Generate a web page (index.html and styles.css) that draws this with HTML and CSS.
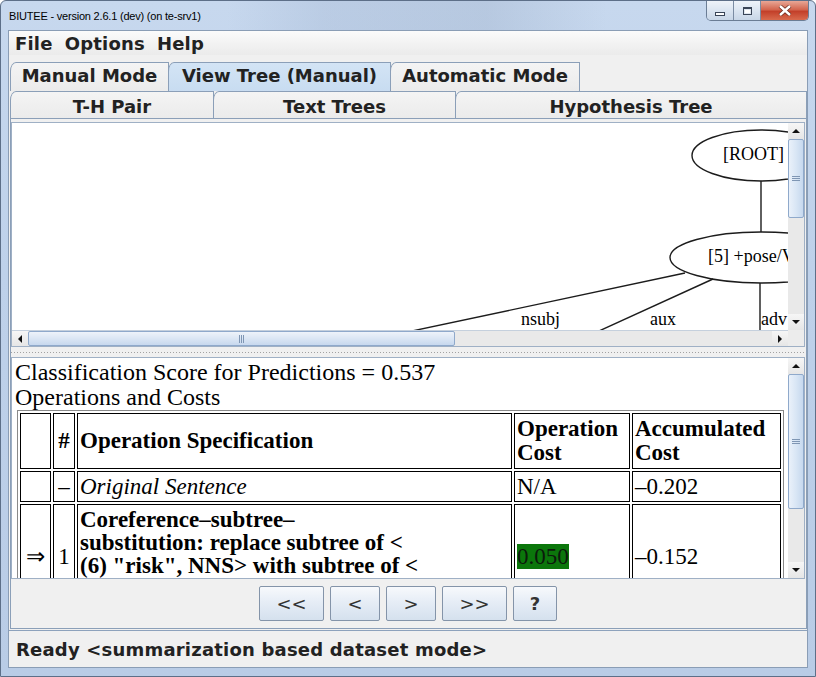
FILE: index.html
```html
<!DOCTYPE html>
<html>
<head>
<meta charset="utf-8">
<title>BIUTEE</title>
<link rel="stylesheet" href="styles.css">
</head>
<body>
<div class="window">
  <div class="titlebar">
    <span class="title">BIUTEE - version 2.6.1 (dev) (on te-srv1)</span>
    <div class="winbtns">
      <div class="wb"><span class="ico-min"></span></div>
      <div class="wb"><span class="ico-max"></span></div>
      <div class="wb close">
        <svg width="14" height="11" viewBox="0 0 14 11"><path class="x-out" d="M2 1 L12 10 M12 1 L2 10"/><path class="x-in" d="M2 1 L12 10 M12 1 L2 10"/></svg>
      </div>
    </div>
  </div>
  <div class="client">
    <div class="menubar"><span>File</span><span>Options</span><span>Help</span></div>
    <div class="tabrow row1">
      <div class="tab t-manual">Manual Mode</div>
      <div class="tab t-view selected">View Tree (Manual)</div>
      <div class="tab t-auto">Automatic Mode</div>
    </div>
    <div class="tabrow row2">
      <div class="tab t-pair">T-H Pair</div>
      <div class="tab t-text">Text Trees</div>
      <div class="tab t-hyp">Hypothesis Tree</div>
    </div>
    <div class="tabpanel">
      <div class="pane tree-pane">
        <div class="viewport">
          <svg class="tree" width="776" height="207" viewBox="0 0 776 207">
            <g class="edges">
              <ellipse cx="749" cy="32.5" rx="69" ry="25.5"/>
              <line x1="749" y1="58" x2="749" y2="109"/>
              <ellipse cx="749" cy="134.5" rx="91" ry="25.5"/>
              <line x1="673" y1="150" x2="400" y2="208"/>
              <line x1="701" y1="156" x2="587" y2="208"/>
              <line x1="748" y1="160" x2="748" y2="208"/>
            </g>
            <g class="labels">
              <text x="711" y="37">[ROOT]</text>
              <text x="696" y="139">[5] +pose/V</text>
              <text x="509" y="202">nsubj</text>
              <text x="638" y="202">aux</text>
              <text x="749" y="202">adv</text>
            </g>
          </svg>
        </div>
        <div class="vscroll">
          <div class="arrow"><span class="tri-up"></span></div>
          <div class="thumb v tree-thumb"><span class="grip-h"></span></div>
          <div class="track"></div>
          <div class="arrow"><span class="tri-down"></span></div>
        </div>
        <div class="hscroll">
          <div class="arrow h"><span class="tri-left"></span></div>
          <div class="thumb h"><span class="grip-v"></span></div>
          <div class="track"></div>
          <div class="arrow h"><span class="tri-right"></span></div>
        </div>
        <div class="corner"></div>
      </div>
      <div class="divider"></div>
      <div class="pane doc-pane">
        <div class="viewport doc">
          <p class="line">Classification Score for Predictions = 0.537</p>
          <p class="line">Operations and Costs</p>
          <table class="ops">
            <tr class="head">
              <th class="c1"></th>
              <th class="c2 ctr">#</th>
              <th class="c3">Operation Specification</th>
              <th class="c4">Operation<br>Cost</th>
              <th class="c5">Accumulated<br>Cost</th>
            </tr>
            <tr>
              <td></td>
              <td class="ctr">–</td>
              <td><i>Original Sentence</i></td>
              <td>N/A</td>
              <td>–0.202</td>
            </tr>
            <tr class="op">
              <td class="ctr">⇒</td>
              <td class="ctr">1</td>
              <td class="spec">Coreference–subtree–<br>substitution: replace subtree of &lt;<br>(6) "risk", NNS&gt; with subtree of &lt;</td>
              <td><span class="cost-hi">0.050</span></td>
              <td>–0.152</td>
            </tr>
          </table>
        </div>
        <div class="vscroll">
          <div class="arrow"><span class="tri-up"></span></div>
          <div class="thumb v doc-thumb"><span class="grip-h"></span></div>
          <div class="track"></div>
          <div class="arrow"><span class="tri-down"></span></div>
        </div>
      </div>
      <div class="buttons">
        <button class="nav w-wide">&lt;&lt;</button>
        <button class="nav w-mid">&lt;</button>
        <button class="nav w-mid">&gt;</button>
        <button class="nav w-wide">&gt;&gt;</button>
        <button class="nav w-help">?</button>
      </div>
    </div>
    <div class="status">Ready &lt;summarization based dataset mode&gt;</div>
  </div>
</div>
</body>
</html>
```

FILE: styles.css
```css
html, body {
  margin: 0;
  padding: 0;
}
body {
  width: 816px;
  height: 677px;
  overflow: hidden;
  background: #ffffff;
}
.window {
  box-sizing: border-box;
  width: 816px;
  height: 677px;
  border: 1px solid #5d6f88;
  border-radius: 6px 6px 0 0;
  background: linear-gradient(180deg, #c7d8ee 0%, #bed1ea 40%, #b9cce6 100%);
  display: flex;
  flex-direction: column;
  padding: 0 7px 8px 7px;
}
.titlebar {
  height: 29px;
  flex: none;
  display: flex;
  justify-content: space-between;
  align-items: flex-start;
  margin: 0 -1px 0 -7px;
  background: linear-gradient(90deg, transparent 0%, transparent 28%, rgba(150,170,200,0.25) 40%, rgba(120,140,170,0.2) 60%, transparent 75%);
}
.title {
  font-family: "Liberation Sans", Arial, sans-serif;
  font-size: 11px;
  line-height: 14px;
  letter-spacing: -0.2px;
  color: #000;
  padding: 8px 0 0 8px;
}
.winbtns {
  display: flex;
  height: 19px;
  border: 1px solid #6b7d95;
  border-top: none;
  border-radius: 0 0 5px 5px;
  overflow: hidden;
}
.wb {
  width: 26px;
  height: 19px;
  display: flex;
  align-items: center;
  justify-content: center;
  background: linear-gradient(180deg, #eef3f9 0%, #dbe5f1 50%, #c8d6e7 100%);
  border-right: 1px solid #7b8ca3;
}
.wb.close {
  width: 47px;
  border-right: none;
  background: linear-gradient(180deg, #e8a796 0%, #d3664f 45%, #c3402a 55%, #d86a4d 100%);
}
.ico-min {
  width: 8px;
  height: 2px;
  margin-top: 6px;
  background: #fff;
  border: 1px solid #3a4557;
}
.ico-max {
  width: 7px;
  height: 5px;
  border: 1px solid #3a4557;
  border-top-width: 2px;
  background: #fff;
  box-shadow: inset 0 0 0 1px #dfe6ef;
}
.x-out { stroke: #6b2c1f; stroke-width: 4; fill: none; }
.x-in { stroke: #ffffff; stroke-width: 2.4; fill: none; }

.client {
  flex: none;
  height: 638px;
  box-sizing: border-box;
  border: 1px solid #8a9db5;
  background: #f0f0f0;
  display: flex;
  flex-direction: column;
  font-family: "DejaVu Sans", sans-serif;
  font-weight: bold;
  font-size: 18px;
  color: #222;
}
.menubar {
  height: 24px;
  flex: none;
  box-sizing: border-box;
  padding: 2px 0 0 6px;
  line-height: 21px;
  display: flex;
  gap: 12px;
  letter-spacing: 0.2px;
  background: linear-gradient(180deg, #fbfbfb 0%, #f1f1f1 60%, #ebebeb 100%);
}
.tabrow {
  display: flex;
  flex: none;
  padding-left: 1px;
}
.row1 {
  height: 29px;
  margin-top: 7px;
}
.row2 {
  height: 27px;
}
.tab {
  box-sizing: border-box;
  border: 1px solid #8b9fb8;
  border-bottom: none;
  border-top-left-radius: 6px 9px;
  background: linear-gradient(180deg, #f4f4f4 0%, #ebebeb 100%);
  text-align: center;
  line-height: 21px;
  margin-right: -1px;
  white-space: nowrap;
}
.row1 .tab { padding-top: 2px; }
.row2 .tab { padding-top: 4px; }
.tab.selected {
  background: linear-gradient(180deg, #d3e4f5 0%, #c8dcf1 100%);
}
.t-manual { width: 159px; }
.t-view { width: 223px; }
.t-auto { width: 190px; }
.t-pair { width: 204px; }
.t-text { width: 243px; }
.t-hyp { flex: 1; margin-right: 0; }

.tabpanel {
  flex: none;
  height: 511px;
  box-sizing: border-box;
  margin-left: 1px;
  border: 1px solid #8b9fb8;
  padding: 3px 1px 0 0;
  display: flex;
  flex-direction: column;
}
.pane {
  border: 1px solid #9fb0c5;
  display: grid;
  background: #fff;
  flex: none;
}
.tree-pane {
  grid-template-columns: 776px 16px;
  grid-template-rows: 207px 16px;
}
.doc-pane {
  grid-template-columns: 776px 16px;
  grid-template-rows: 220px;
}
.viewport {
  overflow: hidden;
  background: #fff;
}
.tree { display: block; }
.edges { fill: none; stroke: #1c1c1c; stroke-width: 1.4; }
.labels { font-family: "Liberation Serif", "Times New Roman", serif; font-size: 18px; font-weight: normal; fill: #000; }

.vscroll {
  display: flex;
  flex-direction: column;
  background: #e9e9e9;
}
.hscroll {
  display: flex;
  background: #e9e9e9;
  border-top: 1px solid #c5d0dd;
}
.corner { background: #ececec; }
.arrow {
  flex: none;
  height: 16px;
  display: flex;
  align-items: center;
  justify-content: center;
  background: linear-gradient(180deg, #f6f6f6 0%, #e6e6e6 100%);
}
.arrow.h {
  width: 16px;
  height: auto;
}
.track { flex: 1; }
.thumb {
  box-sizing: border-box;
  flex: none;
  border: 1px solid #8fa9cb;
  border-radius: 2px;
  display: flex;
  align-items: center;
  justify-content: center;
}
.thumb.v {
  background: linear-gradient(90deg, #eaf1fa 0%, #d9e6f5 50%, #c6d8ee 100%);
}
.thumb.h {
  width: 427px;
  background: linear-gradient(180deg, #eef3fa 0%, #dbe6f4 50%, #c7d8ee 100%);
}
.tree-thumb { height: 79px; }
.doc-thumb { height: 135px; }
.grip-h {
  width: 8px;
  height: 5px;
  background: repeating-linear-gradient(180deg, #7f96b4 0 1px, transparent 1px 2px);
}
.grip-v {
  width: 5px;
  height: 8px;
  background: repeating-linear-gradient(90deg, #7f96b4 0 1px, transparent 1px 2px);
}
.tri-up, .tri-down, .tri-left, .tri-right { width: 0; height: 0; }
.tri-up { border-left: 4px solid transparent; border-right: 4px solid transparent; border-bottom: 4px solid #111; }
.tri-down { border-left: 4px solid transparent; border-right: 4px solid transparent; border-top: 4px solid #111; }
.tri-left { border-top: 4px solid transparent; border-bottom: 4px solid transparent; border-right: 4px solid #111; }
.tri-right { border-top: 4px solid transparent; border-bottom: 4px solid transparent; border-left: 4px solid #111; }

.divider {
  height: 10px;
  flex: none;
  background: repeating-linear-gradient(90deg, #a2a2a2 0 1px, transparent 1px 3px) 0 5px / 100% 1px no-repeat;
}
.doc {
  box-sizing: border-box;
  padding: 2px 0 0 3px;
  font-family: "Liberation Serif", "Times New Roman", serif;
  font-weight: normal;
  font-size: 24px;
  line-height: 25px;
  color: #000;
}
.line { margin: 0; white-space: nowrap; }
.ops {
  margin-left: 2px;
  width: 767px;
  table-layout: fixed;
  border-collapse: separate;
  border-spacing: 2px;
  border: 1px solid #8a8a8a;
  font-size: 23px;
}
.ops th, .ops td {
  box-sizing: border-box;
  border: 1px solid #000;
  padding: 3px 2px;
  text-align: left;
  vertical-align: middle;
  line-height: 23px;
}
.ops th { font-weight: bold; line-height: 24px; }
.ops .ctr { text-align: center; padding: 3px 0; }
.c1 { width: 31px; }
.c2 { width: 22px; }
.c3 { width: 435px; }
.c4 { width: 116px; }
.c5 { width: 149px; }
.ops td.spec { font-weight: bold; padding-bottom: 30px; }
.cost-hi {
  background: #0b760b;
  color: #0c1a0c;
}

.buttons {
  flex: 1;
  display: flex;
  justify-content: center;
  align-items: flex-start;
  gap: 6px;
  padding-top: 7px;
}
.nav {
  height: 35px;
  box-sizing: border-box;
  border: 1px solid #8494a9;
  border-radius: 2px;
  background: linear-gradient(180deg, #f7f9fc 0%, #e6edf6 45%, #d5e1ee 100%);
  font-family: "DejaVu Sans", sans-serif;
  font-size: 18px;
  font-weight: normal;
  color: #333;
  padding: 0;
}
.w-wide { width: 65px; }
.w-mid { width: 50px; }
.w-help { width: 44px; font-weight: bold; }

.status {
  flex: none;
  margin-top: 1px;
  height: 37px;
  box-sizing: border-box;
  border-top: 1px solid #8da2bc;
  padding: 8px 0 0 7px;
  line-height: 21px;
  letter-spacing: 0.2px;
  white-space: nowrap;
}
```
